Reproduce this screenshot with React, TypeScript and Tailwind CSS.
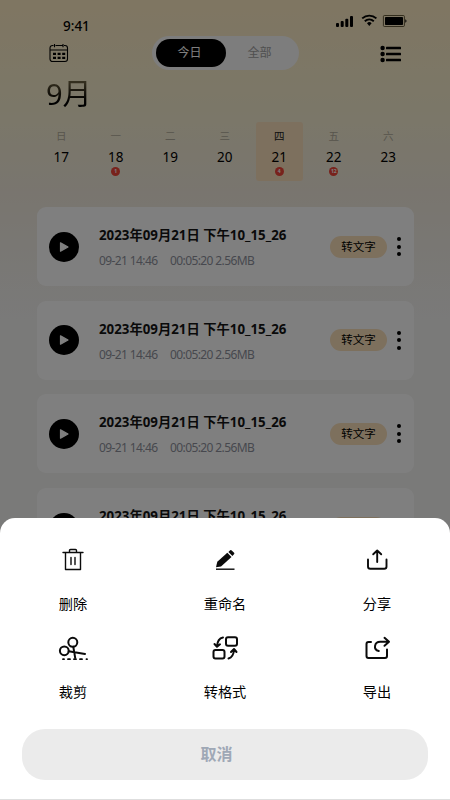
import React, { useState } from 'react';

const days = [
  { label: '日', date: 17 },
  { label: '一', date: 18, count: 1 },
  { label: '二', date: 19 },
  { label: '三', date: 20 },
  { label: '四', date: 21, count: 4 },
  { label: '五', date: 22, count: 12 },
  { label: '六', date: 23 },
];

const recordings = [1, 2, 3, 4].map((id) => ({
  id,
  title: '2023年09月21日 下午10_15_26',
  time: '09-21 14:46',
  info: '00:05:20 2.56MB',
}));

function StatusBar() {
  return (
    <div className="flex h-[36px] items-start justify-between pl-[63px] pr-[42px]">
      <span className="mt-[17px] text-[13.5px] leading-[19px] font-medium">9:41</span>
      <svg className="mt-[14px]" width="72" height="14" viewBox="0 0 72 14" fill="none">
        <g fill="#000">
          <rect x="0" y="9" width="3" height="4" rx="1" />
          <rect x="4.7" y="7" width="3" height="6" rx="1" />
          <rect x="9.3" y="4.8" width="3" height="8.2" rx="1" />
          <rect x="14" y="2" width="3" height="11" rx="1" />
          <path d="M31 9.2a3.3 3.3 0 0 1 4.6 0L33.3 12z" />
          <rect x="49" y="3" width="18" height="8" rx="0.8" />
          <path d="M69.3 5.2c1.6.5 1.6 3 0 3.5z" />
        </g>
        <path d="M26.2 4.4c4-3.7 10.2-3.7 14.2 0M28.8 7.2c2.6-2.3 6.4-2.3 9 0" stroke="#000" strokeWidth="1.9" />
        <rect x="47.4" y="1.5" width="21" height="11" rx="1" stroke="#3f3618" strokeWidth="0.8" />
      </svg>
    </div>
  );
}

function CalendarIcon() {
  return (
    <svg width="20" height="20" viewBox="0 0 20 20" fill="none" stroke="#000" strokeWidth="1.1">
      <path d="M4.5 2.5H3.5a2.500 2.500 0 0 0-2.500 2.500v11a2.500 2.500 0 0 0 2.500 2.500h12.500a2.500 2.500 0 0 0 2.500-2.500V5a2.500 2.500 0 0 0-2.500-2.500h-1M6.500 2.500h7M1 7h17.500M5.500 1v3.200M14 1v3.200" />
      <path d="M4 10.800h12.500M4 14.800h12.500" strokeWidth="2.2" strokeDasharray="3 1.6" />
    </svg>
  );
}

function ListIcon() {
  return (
    <svg className="mt-[2px]" width="22" height="18" viewBox="0 0 22 18">
      {[3, 9, 15].map((y) => (
        <g key={y}>
          <circle cx="2.6" cy={y} r="2.2" />
          <rect x="6" y={y - 1.3} width="15" height="2.6" rx="0.6" />
        </g>
      ))}
    </svg>
  );
}

function Week() {
  return (
    <div className="mt-[8px] flex pl-[34px]">
      {days.map((day) => {
        const active = day.date === 21;
        return (
          <div key={day.date} className="flex w-[54.5px] shrink-0 justify-center">
            <div
              className={`flex h-[59px] w-[47px] flex-col items-center rounded-[3px] ${
                active ? 'bg-[#fae0bd]' : ''
              }`}
            >
              <span
                className={`mt-[6px] text-[10.5px] leading-[16px] ${active ? 'text-[#222]' : 'text-[#b0aa9a]'}`}
              >
                {day.label}
              </span>
              <span className="mt-[3px] text-[13.5px] leading-[20px]">{day.date}</span>
              {day.count && (
                <span className="flex h-[9px] w-[9px] items-center justify-center rounded-full bg-[#f04438] text-[5px] leading-none font-bold text-white">
                  {day.count}
                </span>
              )}
            </div>
          </div>
        );
      })}
    </div>
  );
}

function RecordingCard({ title, time, info }: { title: string; time: string; info: string }) {
  return (
    <div className="flex h-[79px] shrink-0 items-center rounded-[9px] bg-white pr-[13px] pl-[12px]">
      <button className="flex h-[30px] w-[30px] items-center justify-center rounded-full bg-black">
        <svg width="12" height="12" viewBox="0 0 12 12">
          <path d="M2.5 1.8v8.4l7.5-4.2z" fill="#fff" stroke="#fff" strokeWidth="1.2" strokeLinejoin="round" />
        </svg>
      </button>
      <div className="mt-[2px] ml-[20px] flex flex-col whitespace-nowrap">
        <span className="text-[13.3px] leading-[20px] font-bold text-[#151515]">{title}</span>
        <span className="mt-[7px] flex gap-[12.5px] text-[12px] leading-[18px] tracking-[-0.6px] text-[#8e919c]">
          <span>{time}</span>
          <span>{info}</span>
        </span>
      </div>
      <button className="ml-auto h-[22px] w-[57px] rounded-full bg-[#fae0bb] text-[11.5px] leading-[22px]">
        转文字
      </button>
      <button className="ml-[10px] flex flex-col gap-[3.5px]">
        <span className="h-[4px] w-[4px] rounded-full bg-black" />
        <span className="h-[4px] w-[4px] rounded-full bg-black" />
        <span className="h-[4px] w-[4px] rounded-full bg-black" />
      </button>
    </div>
  );
}

const stroke = {
  fill: 'none',
  stroke: '#0b0b0b',
  strokeWidth: 2,
  strokeLinecap: 'round' as const,
  strokeLinejoin: 'round' as const,
};

const actions = [
  {
    label: '删除',
    icon: (
      <g {...stroke} strokeWidth={1.4}>
        <path d="M5 6.500h20M7.500 6.500v17h15v-17M11.500 6V4.500q0-1 1-1h5q1 0 1 1V6M13 11.500v7M17 11.500v7" />
      </g>
    ),
  },
  {
    label: '重命名',
    icon: (
      <g fill="#0b0b0b">
        <path d="M6 21.300l1.300-5.500L17.300 6.800l4.200 4.300L11 20.500z" />
        <path d="M18.400 5.900l1.800-1.600q.8-.6 1.500.1l2.400 2.400q.7.800-.1 1.500l-1.600 1.700z" />
        <rect x="6" y="22.5" width="18.5" height="1.4" />
      </g>
    ),
  },
  {
    label: '分享',
    icon: (
      <g {...stroke} strokeWidth={1.9}>
        <path d="M6 13.500v7q0 2.300 2.300 2.300h13.900q2.300 0 2.300-2.300v-7M15.200 16V4.500M11.200 8.300l4-3.800 4 3.800" />
      </g>
    ),
  },
  {
    label: '裁剪',
    icon: (
      <g {...stroke}>
        <circle cx="14.8" cy="8.3" r="4.5" />
        <circle cx="6.3" cy="16.8" r="4.4" />
        <path d="M15.300 12.800L17.200 23.800M10.700 17.300L27 19.900" />
        <path d="M5 25.200h1M10 25.200h2M16 25.200h2M22 25.200h2M28.500 25.200h.5" strokeWidth="1.8" />
      </g>
    ),
  },
  {
    label: '转格式',
    icon: (
      <g {...stroke}>
        <rect x="16" y="3.2" width="11" height="8.5" rx="2" />
        <rect x="3.5" y="16" width="11" height="8.5" rx="2" />
        <path d="M13 3.500Q7.500 4.500 7 12.300M4.500 10L7 12.800l3-2.500M18.500 24.500q5-1.500 5.500-8.500M21 18l3-3 2.500 3" />
      </g>
    ),
  },
  {
    label: '导出',
    icon: (
      <g {...stroke}>
        <path d="M9 8H6.500q-2 0-2 2v12q0 2 2 2h16.500q2 0 2-2v-6.500M16.800 17C10.800 15.500 12.300 7.800 18.300 7.800h8.500M22.500 3.800l4.500 4-4.500 4" />
      </g>
    ),
  },
];

function ActionSheet({ onCancel }: { onCancel: () => void }) {
  return (
    <div className="absolute inset-x-0 bottom-0 h-[282px] rounded-t-[15px] border-b border-[#dedede] bg-white">
      <div className="grid grid-cols-[146px_158px_146px] pt-[27px]">
        {actions.map((action) => (
          <button key={action.label} className="flex h-[88px] flex-col items-center pt-px">
            <svg width="30" height="30" viewBox="0 0 30 30">
              {action.icon}
            </svg>
            <span className="mt-[17px] text-[14.2px] leading-[22px]">{action.label}</span>
          </button>
        ))}
      </div>
      <button
        onClick={onCancel}
        className="mx-[22px] mt-[8px] block h-[51px] w-[406px] rounded-[23px] bg-[#ebebeb] pr-[17px] pb-[2px] text-[16px] font-bold text-[#9fa8b6]"
      >
        取消
      </button>
    </div>
  );
}

export default function App() {
  const [tab, setTab] = useState('今日');
  const [sheetOpen, setSheetOpen] = useState(true);

  return (
    <div className="relative h-[800px] w-[450px] overflow-hidden bg-[linear-gradient(180deg,#ffecc4_0%,#f7efd0_13%,#f2ebde_24%,#f4f4f3_40%)] font-['Noto_Sans','Noto_Sans_CJK_SC',sans-serif] text-black">
      <StatusBar />
      <header className="flex h-[34px] items-center pl-[48.5px]">
        <CalendarIcon />
        <div className="mr-[81px] ml-[83px] flex h-[34px] w-[147px] items-center rounded-full bg-[#fafafa] pl-[4px]">
          {['今日', '全部'].map((name) => (
            <button
              key={name}
              onClick={() => setTab(name)}
              className={`h-[28px] w-[70px] rounded-full pr-[2px] text-[12px] ${
                tab === name ? 'bg-black text-white' : 'text-[#a0a0a0]'
              }`}
            >
              {name}
            </button>
          ))}
        </div>
        <ListIcon />
      </header>
      <h1 className="mt-[4px] ml-[46px] h-[40px] w-[60px] bg-linear-to-b from-[#6b6040] from-20% to-black to-80% bg-clip-text text-[29px] leading-[40px] text-transparent">
        9月
      </h1>
      <Week />
      <main className="mt-[26px] mr-[36px] ml-[37px] flex flex-col gap-[14.7px]">
        {recordings.map((item) => (
          <RecordingCard key={item.id} title={item.title} time={item.time} info={item.info} />
        ))}
      </main>

      {sheetOpen && (
        <>
          <div className="absolute inset-0 bg-black/50" />
          <ActionSheet onCancel={() => setSheetOpen(false)} />
        </>
      )}
    </div>
  );
}
